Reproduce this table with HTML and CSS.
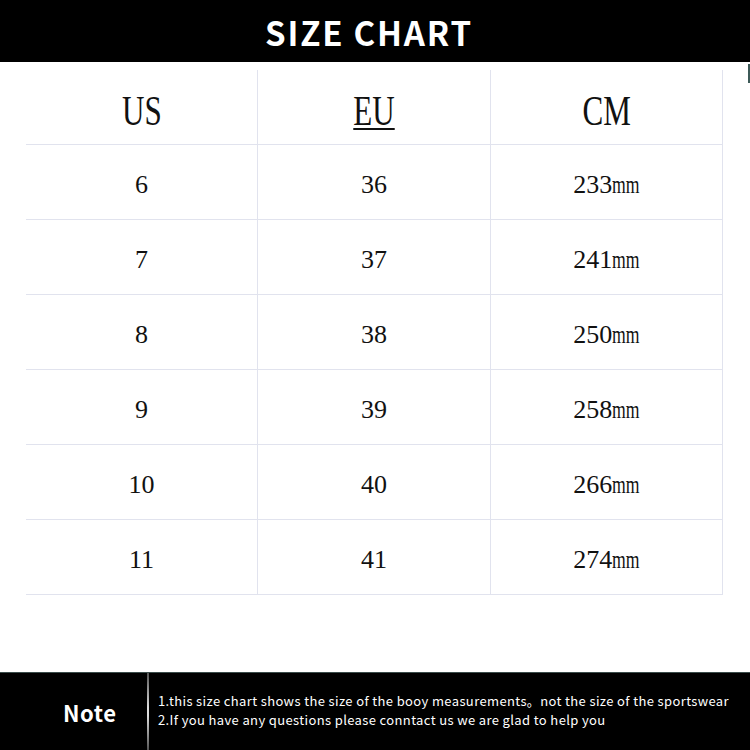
FILE: index.html
```html
<!DOCTYPE html>
<html>
<head>
<meta charset="utf-8">
<link rel="stylesheet" href="styles.css">
</head>
<body>
<div class="page">
  <header class="title-bar"><h1 class="title">SIZE CHART</h1></header>
  <span class="edge-mark"></span>
  <div class="chart">
    <div class="cell head"><span class="cond">US</span></div>
    <div class="cell head"><span class="cond under">EU</span></div>
    <div class="cell head"><span class="cond">CM</span></div>

    <div class="cell">6</div><div class="cell">36</div><div class="cell">233<span class="mm">mm</span></div>
    <div class="cell">7</div><div class="cell">37</div><div class="cell">241<span class="mm">mm</span></div>
    <div class="cell">8</div><div class="cell">38</div><div class="cell">250<span class="mm">mm</span></div>
    <div class="cell">9</div><div class="cell">39</div><div class="cell">258<span class="mm">mm</span></div>
    <div class="cell">10</div><div class="cell">40</div><div class="cell">266<span class="mm">mm</span></div>
    <div class="cell">11</div><div class="cell">41</div><div class="cell">274<span class="mm">mm</span></div>
  </div>
  <footer class="note">
    <div class="note-label">Note</div>
    <div class="note-divider"></div>
    <div class="note-text">
      <p>1.this size chart shows the size of the booy measurements。not the size of the sportswear</p>
      <p>2.If you have any questions please conntact us we are glad to help you</p>
    </div>
  </footer>
</div>
</body>
</html>
```
FILE: styles.css
```css
html, body {
  margin: 0;
  padding: 0;
  background: #fff;
}
.page {
  position: relative;
  width: 750px;
  height: 750px;
  display: flex;
  flex-direction: column;
  overflow: hidden;
}
.title-bar {
  background: #000;
  height: 62px;
  display: flex;
  align-items: center;
  justify-content: center;
}
.title {
  margin: 0;
  color: #fff;
  font-family: "Noto Sans CJK SC", "Noto Sans", sans-serif;
  font-weight: 700;
  font-size: 33px;
  letter-spacing: 1.8px;
  line-height: 1;
  padding-top: 2px;
  padding-right: 12px;
}
.edge-mark {
  position: absolute;
  right: 0;
  top: 64px;
  width: 2px;
  height: 19px;
  background: #3e5a58;
}
.chart {
  margin: 8px 0 0 26px;
  width: 697px;
  display: grid;
  grid-template-columns: 232px 233px 232px;
  grid-auto-rows: 75px;
}
.cell {
  box-sizing: border-box;
  border-bottom: 1px solid #e1e3ee;
  border-right: 1px solid #e1e3ee;
  display: flex;
  align-items: center;
  justify-content: center;
  font-family: "Liberation Serif", serif;
  font-size: 26px;
  color: #111;
  padding-top: 6px;
}
.head {
  font-size: 42px;
  padding-top: 7px;
}
.cond {
  display: inline-block;
  transform: scaleX(0.74);
}
.under {
  text-decoration: underline;
  text-decoration-thickness: 2px;
  text-underline-offset: 3px;
}
.mm {
  display: inline-block;
  transform: scaleX(0.68);
  transform-origin: left center;
  margin-right: -13px;
}
.note {
  margin-top: auto;
  height: 78px;
  background: #000;
  border-top: 1px solid #3a4c4a;
  box-sizing: border-box;
  display: flex;
  align-items: stretch;
}
.note-label {
  width: 147px;
  box-sizing: border-box;
  padding-left: 63px;
  display: flex;
  align-items: center;
  color: #fff;
  font-family: "Noto Sans CJK SC", "Noto Sans", sans-serif;
  font-weight: 700;
  font-size: 22px;
  letter-spacing: 0.6px;
}
.note-divider {
  width: 2px;
  background: linear-gradient(to bottom, #555 0%, #ddd 45%, #ddd 55%, #555 100%);
}
.note-text {
  padding-left: 9px;
  display: flex;
  flex-direction: column;
  justify-content: center;
  padding-bottom: 4px;
  color: #fff;
  font-family: "Noto Sans CJK SC", "Noto Sans", sans-serif;
  font-size: 13px;
  letter-spacing: 0.37px;
  line-height: 19px;
}
.note-text p {
  margin: 0;
  white-space: nowrap;
}
```
